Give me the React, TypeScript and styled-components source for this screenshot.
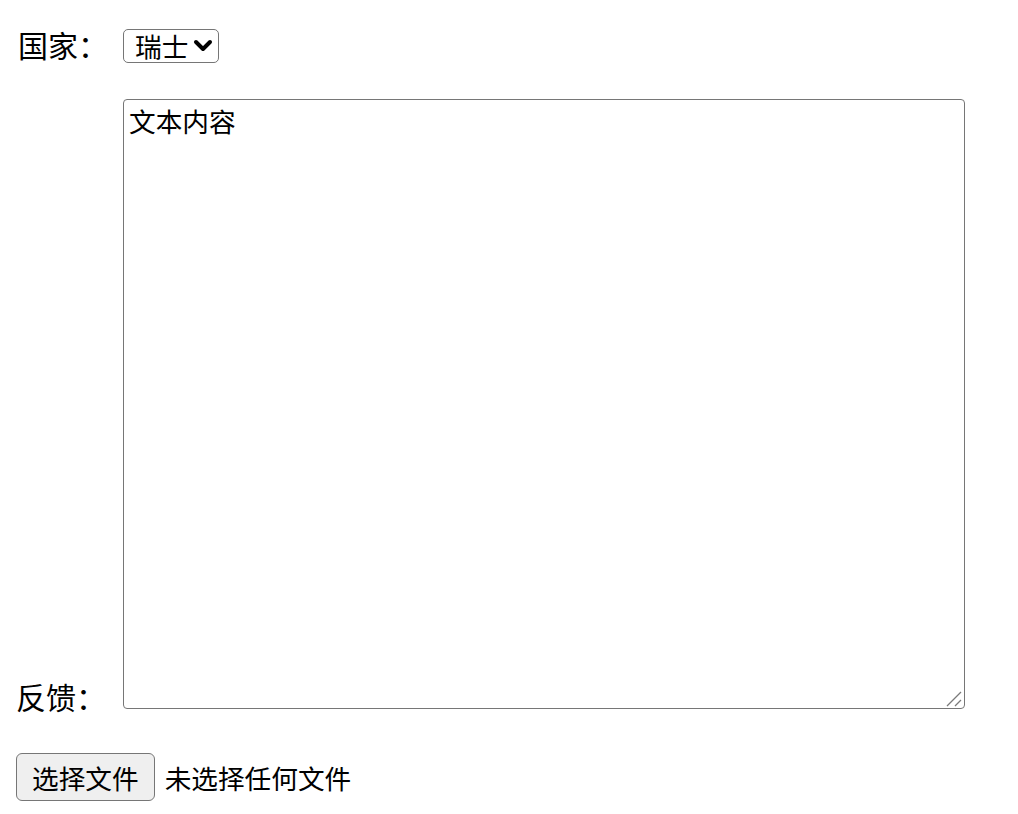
import { createGlobalStyle } from 'styled-components'
import styled from 'styled-components'

const GlobalStyle = createGlobalStyle`
  body {
    margin: 16px;
    background: #ffffff;
    color: #000000;
    font-family: 'Noto Sans CJK SC', 'Liberation Sans', sans-serif;
  }
`

const Form = styled.form`
  display: flex;
  flex-direction: column;
  padding-top: 13px;
`

const Row = styled.div<{ align: 'center' | 'flex-end'; gap: number }>`
  display: flex;
  align-items: ${(props) => props.align};
  margin-bottom: ${(props) => props.gap}px;
`

const Label = styled.label<{ drop?: number; nudge?: number }>`
  flex: 0 0 107px;
  font-size: 30px;
  line-height: 30px;
  margin-bottom: ${(props) => props.drop || 0}px;
  text-indent: ${(props) => props.nudge || 0}px;
`

const SelectWrap = styled.div`
  position: relative;
  display: inline-flex;
`

const Select = styled.select`
  appearance: none;
  -webkit-appearance: none;
  width: 96px;
  height: 34px;
  padding: 0 30px 0 11px;
  border: 1.5px solid #767676;
  border-radius: 5px;
  background: #ffffff;
  color: #000000;
  font-family: inherit;
  font-size: 26.67px;
  line-height: 30px;
  outline: none;
`

const Chevron = styled.svg`
  position: absolute;
  right: 6px;
  top: 10px;
  width: 20px;
  height: 14px;
  pointer-events: none;
`

const TextWrap = styled.div`
  position: relative;
  display: flex;
`

const TextArea = styled.textarea`
  box-sizing: border-box;
  width: 842px;
  height: 610px;
  padding: 1px 5px 4px;
  border: 1.5px solid #767676;
  border-radius: 4px;
  resize: none;
  font-family: inherit;
  font-size: 26.67px;
  color: #000000;
  outline: none;
`

const Grip = styled.svg`
  position: absolute;
  right: 3px;
  bottom: 2px;
  width: 16px;
  height: 16px;
  pointer-events: none;
`

const FileRow = styled.div`
  display: flex;
  align-items: center;
  gap: 10px;
  font-size: 26.67px;
`

const FileButton = styled.button`
  box-sizing: border-box;
  height: 48px;
  padding: 0 15px;
  border: 1.5px solid #767676;
  border-radius: 6px;
  background: #efefef;
  color: #000000;
  font-family: inherit;
  font-size: 26.67px;
`

const FileStatus = styled.span`
  color: #000000;
`

export default function App() {
  return (
    <>
      <GlobalStyle />
      <Form lang="zh-CN" onSubmit={(e) => e.preventDefault()}>
        <Row align="center" gap={36}>
          <Label htmlFor="country" nudge={-13} drop={4}>
            国家：
          </Label>
          <SelectWrap>
            <Select id="country" defaultValue="ch">
              <option value="ch">瑞士</option>
              <option value="cn">中国</option>
            </Select>
            <Chevron viewBox="0 0 20 14">
              <path
                d="M3 3 L10 10 L17 3"
                fill="none"
                stroke="#000"
                strokeWidth="4"
                strokeLinecap="round"
                strokeLinejoin="round"
              />
            </Chevron>
          </SelectWrap>
        </Row>
        <Row align="flex-end" gap={44}>
          <Label htmlFor="feedback" drop={-2}>
            反馈：
          </Label>
          <TextWrap>
            <TextArea id="feedback" defaultValue="文本内容" />
            <Grip viewBox="0 0 16 16">
              <path
                d="M1 15 L15 1 M9 15 L15 9"
                fill="none"
                stroke="#7a7a7a"
                strokeWidth="1.3"
              />
            </Grip>
          </TextWrap>
        </Row>
        <FileRow>
          <FileButton type="button">选择文件</FileButton>
          <FileStatus>未选择任何文件</FileStatus>
        </FileRow>
      </Form>
    </>
  )
}
